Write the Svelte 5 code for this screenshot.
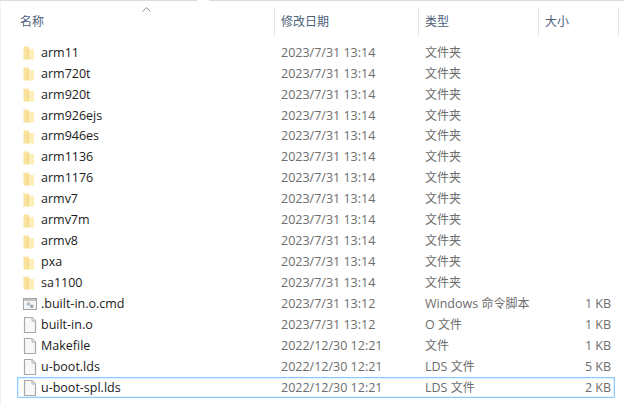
<script>
  const folderDate = "2023/7/31 13:14";
  const files = [
    { name: "arm11", date: folderDate, type: "文件夹", size: "", icon: "folder" },
    { name: "arm720t", date: folderDate, type: "文件夹", size: "", icon: "folder" },
    { name: "arm920t", date: folderDate, type: "文件夹", size: "", icon: "folder" },
    { name: "arm926ejs", date: folderDate, type: "文件夹", size: "", icon: "folder" },
    { name: "arm946es", date: folderDate, type: "文件夹", size: "", icon: "folder" },
    { name: "arm1136", date: folderDate, type: "文件夹", size: "", icon: "folder" },
    { name: "arm1176", date: folderDate, type: "文件夹", size: "", icon: "folder" },
    { name: "armv7", date: folderDate, type: "文件夹", size: "", icon: "folder" },
    { name: "armv7m", date: folderDate, type: "文件夹", size: "", icon: "folder" },
    { name: "armv8", date: folderDate, type: "文件夹", size: "", icon: "folder" },
    { name: "pxa", date: folderDate, type: "文件夹", size: "", icon: "folder" },
    { name: "sa1100", date: folderDate, type: "文件夹", size: "", icon: "folder" },
    { name: ".built-in.o.cmd", date: "2023/7/31 13:12", prefix: "Windows ", type: "命令脚本", size: "1 KB", icon: "script" },
    { name: "built-in.o", date: "2023/7/31 13:12", prefix: "O ", type: "文件", size: "1 KB", icon: "file" },
    { name: "Makefile", date: "2022/12/30 12:21", type: "文件", size: "1 KB", icon: "file" },
    { name: "u-boot.lds", date: "2022/12/30 12:21", prefix: "LDS ", type: "文件", size: "5 KB", icon: "file" },
    { name: "u-boot-spl.lds", date: "2022/12/30 12:21", prefix: "LDS ", type: "文件", size: "2 KB", icon: "file", focused: true }
  ];
</script>

<div class="topline">
  <div class="seg first"></div>
  <div class="seg"></div>
</div>

<div class="explorer">
  <div class="header">
    <div class="col name-col">
      名称
      <svg class="sort" width="9" height="5" viewBox="0 0 9 5"><path d="M0.5 4.5 L4.5 0.7 L8.5 4.5" fill="none" stroke="#8a8a8a" stroke-width="1" /></svg>
    </div>
    <div class="col">修改日期</div>
    <div class="col">类型</div>
    <div class="col">大小</div>
  </div>

  <div class="rows">
    {#each files as f}
      <div class="row" class:focused={f.focused}>
        <div class="name">
          {#if f.icon === "folder"}
            <svg class="icon" width="14" height="14" viewBox="0 0 14 14">
              <path d="M0.5 0.5 H5 L6.5 2 V13.5 H0.5 Z" fill="#f9e39f" />
              <path d="M5.5 3 H11 V13.5 H4.5 Z" fill="#fdeeb8" />
              <path d="M4.2 3.5 L5.7 2.6 V12.8 L4.2 13.5 Z" fill="#f4d685" />
            </svg>
          {:else if f.icon === "script"}
            <svg class="icon" width="14" height="14" viewBox="0 0 14 14">
              <rect x="0.5" y="1.5" width="13" height="11" fill="#f4f4f4" stroke="#a3a3a3" />
              <rect x="1" y="2" width="12" height="2" fill="#c4c4c4" />
              <circle cx="5.5" cy="7" r="1.8" fill="#b0bac4" />
              <circle cx="8.8" cy="9.3" r="1.7" fill="#98a4b0" />
            </svg>
          {:else}
            <svg class="icon" width="14" height="16" viewBox="0 0 14 16">
              <path d="M1.5 0.5 H9 L12.5 4 V15.5 H1.5 Z" fill="#f8f8f8" stroke="#a8a8a8" stroke-width="1.2" />
              <path d="M9 0.5 V4 H12.5" fill="#e6e6e6" stroke="#b4b4b4" />
            </svg>
          {/if}
          <span>{f.name}</span>
        </div>
        <div class="cell">{f.date}</div>
        <div class="cell type">{#if f.prefix}<span class="latin">{f.prefix}</span>{/if}{f.type}</div>
        <div class="cell size">{f.size}</div>
      </div>
    {/each}
  </div>
</div>

<style>
  :global(body) {
    margin: 0;
    background: #ffffff;
    overflow: hidden;
    font-family: "Open Sans", "Noto Sans CJK SC", sans-serif;
    font-size: 12.5px;
  }

  .topline {
    display: flex;
    gap: 12px;
    height: 1px;
  }

  .seg {
    flex: 1;
    background: #dcdcdc;
  }

  .seg.first {
    flex: 0 0 197px;
  }

  .explorer {
    padding: 7px 0 0 1px;
    border-left: 1px solid #f2f2f2;
    height: 397px;
  }

  .header {
    display: grid;
    grid-template-columns: 273px 144px 120px 80px;
    height: 27px;
    color: #4c607a;
    font-size: 12px;
  }

  .col {
    position: relative;
    padding-left: 6px;
    line-height: 28px;
    border-right: 1px solid #e5e5e5;
  }

  .name-col {
    padding-left: 18px;
  }

  .sort {
    position: absolute;
    left: 140px;
    top: -1px;
  }

  .rows {
    margin-top: 7.7px;
  }

  .row {
    display: grid;
    grid-template-columns: 272px 144px 120px 73px;
    height: 20.94px;
    line-height: 20.94px;
    color: #6d6d6d;
    box-sizing: border-box;
  }

  .row.focused {
    height: 21px;
    margin-top: -0.5px;
    margin-left: 15px;
    margin-right: 9px;
    line-height: 20px;
    border: 1px solid #8ccbff;
    box-shadow: inset 0 0 0 1px rgba(153, 209, 255, 0.3);
    grid-template-columns: 256px 144px 120px 73px;
  }

  .name {
    display: flex;
    align-items: center;
    padding-left: 21px;
    color: #1a1a1a;
  }

  .focused .name {
    padding-left: 5px;
  }

  .icon {
    flex: 0 0 14px;
    margin-right: 4px;
  }

  .cell {
    padding-left: 7px;
    white-space: nowrap;
  }

  .type {
    font-size: 12px;
  }

  .latin {
    font-size: 12.5px;
  }

  .size {
    text-align: right;
    padding-left: 0;
  }
</style>
